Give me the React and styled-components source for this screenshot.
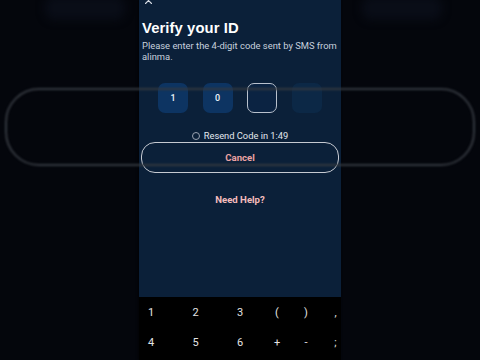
import React from "react";
import styled, { createGlobalStyle } from "styled-components";

const Global = createGlobalStyle`
  html, body { margin: 0; padding: 0; background: #04060c; }
  body { width: 480px; height: 360px; overflow: hidden; font-family: "Roboto", "Liberation Sans", sans-serif; }
`;

const Stage = styled.div`
  display: grid;
  width: 480px;
  height: 360px;
  overflow: hidden;
  background: #04060c;
  & > * { grid-area: 1 / 1; }
`;

const Backdrop = styled.div`
  display: flex;
  flex-direction: column;
`;

const BlobRow = styled.div`
  display: flex;
  justify-content: space-between;
  padding: 0 38px 0 45px;
  height: 26px;
`;

const Blob = styled.div`
  width: 80px;
  height: 24px;
  margin-top: -4px;
  border-radius: 10px;
  background: #090d17;
  filter: blur(4px);
`;

const Ring = styled.div`
  margin: 62px 0 0 5px;
  width: 466px;
  height: 74px;
  border: 2px solid #34383f;
  border-radius: 34px;
  filter: blur(1px);
`;

const Phone = styled.div`
  justify-self: start;
  margin-left: 139px;
  width: 202px;
  height: 360px;
  display: flex;
  flex-direction: column;
  box-shadow: -1px 0 2px rgba(0, 0, 0, 0.6);
`;

const Screen = styled.div`
  height: 297px;
  background: #0b2039;
  display: flex;
  flex-direction: column;
  overflow: hidden;
`;

const Close = styled.svg`
  display: block;
  margin: -3px 0 0 6px;
  width: 7px;
  height: 7px;
`;

const Title = styled.h1`
  margin: 14px 0 0 3px;
  font-family: "Liberation Sans", "Lato", sans-serif;
  font-weight: 700;
  font-size: 14.8px;
  line-height: 20px;
  color: #ffffff;
  letter-spacing: 0.1px;
`;

const Subtitle = styled.p`
  margin: 2px 0 0 3px;
  width: 197px;
  font-size: 9.4px;
  line-height: 11px;
  color: #c8d1de;
`;

const OtpRow = styled.div`
  display: flex;
  justify-content: center;
  gap: 14.7px;
  margin-top: 21px;
`;

const Cell = styled.div`
  box-sizing: border-box;
  width: 30px;
  height: 30px;
  border-radius: 7px;
  display: flex;
  align-items: center;
  justify-content: center;
  font-size: 9px;
  font-weight: 500;
  color: #eef3fa;
  background: ${(p) => (p.$kind === "filled" ? "#0d3462" : p.$kind === "active" ? "#0b2342" : "#0c2846")};
  border: ${(p) => (p.$kind === "active" ? "1.5px solid #b9c1cd" : "none")};
`;

const ResendRow = styled.div`
  display: flex;
  align-items: center;
  justify-content: center;
  gap: 4px;
  margin-top: 17px;
  height: 11px;
  font-size: 9.3px;
  color: #e2e7ee;
`;

const Spinner = styled.span`
  box-sizing: border-box;
  width: 8px;
  height: 8px;
  border-radius: 50%;
  border: 1px solid #9aa3b1;
`;

const CancelButton = styled.button`
  box-sizing: border-box;
  margin: 1px 2px 0;
  height: 31px;
  border: 1px solid #c6cad2;
  border-radius: 14px;
  background: transparent;
  font-family: "Roboto", "Liberation Sans", sans-serif;
  font-size: 9.6px;
  font-weight: 700;
  color: #eba3a3;
  padding: 0;
`;

const HelpLink = styled.div`
  margin-top: 21px;
  text-align: center;
  font-size: 9.6px;
  font-weight: 700;
  color: #f3bcbc;
`;

const Keyboard = styled.div`
  flex: 1;
  background: #000000;
  display: grid;
  grid-template-columns: 44.5px 44.5px 37px 29px 29.5px 20px;
  grid-auto-rows: 29.5px;
  align-items: center;
  padding: 1px 0 0 2px;
`;

const Key = styled.span`
  width: 20px;
  text-align: center;
  font-family: "Roboto", sans-serif;
  font-size: 11px;
  color: #e4e4e4;
`;

const keys = ["1", "2", "3", "(", ")", ",", "4", "5", "6", "+", "-", ";"];

export default function App() {
  return (
    <>
      <Global />
      <Stage>
        <Backdrop>
          <BlobRow>
            <Blob />
            <Blob />
          </BlobRow>
          <Ring />
        </Backdrop>
        <Phone>
          <Screen>
            <Close viewBox="0 0 7 7">
              <path d="M0.5 0.5 L6.5 6.5 M6.5 0.5 L0.5 6.5" stroke="#d8dde6" strokeWidth="1.1" strokeLinecap="round" />
            </Close>
            <Title>Verify your ID</Title>
            <Subtitle>Please enter the 4-digit code sent by SMS from alinma.</Subtitle>
            <OtpRow>
              <Cell $kind="filled">1</Cell>
              <Cell $kind="filled">0</Cell>
              <Cell $kind="active" />
              <Cell $kind="empty" />
            </OtpRow>
            <ResendRow>
              <Spinner />
              <span>Resend Code in 1:49</span>
            </ResendRow>
            <CancelButton>Cancel</CancelButton>
            <HelpLink>Need Help?</HelpLink>
          </Screen>
          <Keyboard>
            {keys.map((k, i) => (
              <Key key={i}>{k}</Key>
            ))}
          </Keyboard>
        </Phone>
      </Stage>
    </>
  );
}
